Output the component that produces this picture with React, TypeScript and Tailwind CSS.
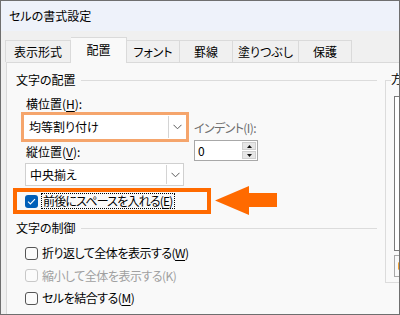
import React from "react";

const FONT = "[font-family:'Noto_Sans_CJK_JP','Noto_Sans',sans-serif] [font-feature-settings:'palt']";

function Chevron() {
  return (
    <svg width="9" height="6" viewBox="0 0 9 6" className="block">
      <path d="M0.5 0.8 L4.5 4.8 L8.5 0.8" fill="none" stroke="#5a5a5a" strokeWidth="1" />
    </svg>
  );
}

function Combo({ text, className }: { text: string; className?: string }) {
  return (
    <div className={"flex items-center bg-white " + (className ?? "")}>
      <div className="flex-1 pl-[4px] text-[12px] leading-none text-black">{text}</div>
      <div className="w-px self-stretch my-[1px] bg-[#d4d4d4]" />
      <div className="w-[16px] flex items-center justify-center">
        <Chevron />
      </div>
    </div>
  );
}

function Box({ state }: { state: "on" | "off" | "disabled" }) {
  if (state === "on") {
    return (
      <div className="w-[13px] h-[13px] rounded-[3px] bg-[#005fb8] flex items-center justify-center shrink-0">
        <svg width="9" height="7" viewBox="0 0 9 7">
          <path d="M1 3.6 L3.4 6 L8 1.2" fill="none" stroke="white" strokeWidth="1.1" />
        </svg>
      </div>
    );
  }
  return (
    <div
      className={
        "w-[13px] h-[13px] rounded-[3px] border bg-[#fbfbfb] shrink-0 " +
        (state === "disabled" ? "border-[#c8c8c8]" : "border-[#555555]")
      }
    />
  );
}

function Check({
  state,
  children,
  className,
}: {
  state: "off" | "disabled";
  children: React.ReactNode;
  className?: string;
}) {
  return (
    <div className={"flex items-center pl-[9px] " + (className ?? "")}>
      <Box state={state} />
      <span
        className={
          "ml-[4px] text-[12px] leading-none tracking-[-0.5px] " +
          (state === "disabled" ? "text-[#a0a0a0]" : "text-black")
        }
      >
        {children}
      </span>
    </div>
  );
}

function GroupHeader({ text, className }: { text: string; className?: string }) {
  return (
    <div className={"flex items-center h-[20px] " + (className ?? "")}>
      <span className="text-[12px] leading-none text-black">{text}</span>
      <div className="flex-1 h-px bg-[#dcdcdc] ml-[5px]" />
    </div>
  );
}

const tabs = [
  { label: "表示形式", w: "w-[66px]", active: false },
  { label: "配置", w: "w-[56px]", active: true },
  { label: "フォント", w: "w-[53px]", active: false },
  { label: "罫線", w: "w-[53px]", active: false },
  { label: "塗りつぶし", w: "w-[66px]", active: false },
  { label: "保護", w: "w-[53px]", active: false },
];

export default function App() {
  return (
    <div className={"w-[400px] h-[315px] overflow-hidden border border-[#6f6f6f] bg-[#f0f0f0] flex flex-col " + FONT}>
      {/* title bar */}
      <div className="h-[30px] bg-[#eef2fa] flex items-center pl-[8px] text-[12px] text-black leading-none shrink-0">
        セルの書式設定
      </div>
      {/* tabs */}
      <div className="h-[31px] flex items-end pl-[4px] shrink-0">
        {tabs.map((t, i) => (
          <div
            key={t.label}
            className={
              t.w +
              " flex items-center justify-center text-[12px] leading-none text-black border-t border-r border-[#dadada] " +
              (i === 0 ? "border-l " : "") +
              (t.active
                ? "h-[26px] bg-[#f9f9f9] relative z-10 -mb-px pb-[2px]"
                : "h-[22px] bg-[#f0f0f0]")
            }
          >
            {t.label}
          </div>
        ))}
      </div>
      {/* panel */}
      <div className="flex-1 ml-[5px] border-t border-l border-[#dadada] bg-[#f9f9f9] flex overflow-hidden">
        {/* left column */}
        <div className="w-[370px] pl-[9px] pt-[7px] flex flex-col shrink-0">
          <GroupHeader text="文字の配置" />
          <div className="flex mt-[5px]">
            <div className="ml-[5px] w-[168px] flex flex-col">
              <div className="h-[18px] pl-[5px] flex items-center text-[12px] leading-none text-black">
                横位置(<span className="underline underline-offset-2">H</span>):
              </div>
              <div className="h-[30px] border-[3px] border-[#f5a56c] -mt-px">
                <Combo text="均等割り付け" className="h-full pl-[1px] pr-[1px]" />
              </div>
              <div className="h-[18px] mt-[1px] pl-[5px] flex items-center text-[12px] leading-none text-black">
                縦位置(<span className="underline underline-offset-2">V</span>):
              </div>
              <Combo text="中央揃え" className="h-[23px] w-[159px] ml-[4px] mt-[2px] border border-[#d0d0d0]" />
            </div>
            <div className="ml-[5px] flex flex-col">
              <div className="h-[18px] mt-[24px] flex items-center text-[12px] leading-none tracking-[-0.6px] text-[#6d6d6d]">
                インデント(I):
              </div>
              <div className="h-[21px] w-[64px] mt-[3px] border border-[#a8a8a8] bg-white flex items-center">
                <span className="flex-1 pl-[3px] text-[12px] leading-none text-black">0</span>
                <div className="w-[15px] h-full flex flex-col gap-px py-[1px] pr-[1px]">
                  <div className="flex-1 bg-[#e6e6e6] border border-[#cfcfcf] flex items-center justify-center">
                    <svg width="5" height="3" viewBox="0 0 5 3"><path d="M0 3 L2.5 0 L5 3Z" fill="#111" /></svg>
                  </div>
                  <div className="flex-1 bg-[#e6e6e6] border border-[#cfcfcf] flex items-center justify-center">
                    <svg width="5" height="3" viewBox="0 0 5 3"><path d="M0 0 L2.5 3 L5 0Z" fill="#111" /></svg>
                  </div>
                </div>
              </div>
            </div>
          </div>
          {/* highlighted checkbox row */}
          <div className="relative -ml-[3px] mt-[2px] h-[26px]">
            <div className="w-[198px] h-[26px] border-4 border-[#ff6a00] flex items-center pl-[8px]">
              <Box state="on" />
              <span className="ml-[3px] px-px py-[1px] border border-dotted border-black text-[12px] leading-none tracking-[-0.8px] text-black">
                前後にスペースを入れる(<span className="underline underline-offset-2">E</span>)
              </span>
            </div>
            <svg
              width="64"
              height="30"
              viewBox="0 0 64 30"
              className="absolute left-[202px] top-[-2px]"
            >
              <path d="M0 14.5 L34 0 L34 7 L62 7 L62 21 L34 21 L34 29 Z" fill="#ff6a00" />
            </svg>
          </div>
          <GroupHeader text="文字の制御" className="mt-[4px]" />
          <Check state="off" className="h-[22px] mt-[4px]">
            折り返して全体を表示する(<span className="underline underline-offset-2">W</span>)
          </Check>
          <Check state="disabled" className="h-[23px]">
            縮小して全体を表示する(K)
          </Check>
          <Check state="off" className="h-[22px]">
            セルを結合する(<span className="underline underline-offset-2">M</span>)
          </Check>
        </div>
        {/* right column (clipped) */}
        <div className="ml-[8px] mt-[17px] flex-1">
          <div className="relative h-[203px] border border-r-0 border-[#dcdcdc] pl-[8px] pt-[15px]">
            <span className="absolute left-[5px] top-[-8px] bg-[#f9f9f9] text-[12px] leading-none text-black">方</span>
            <div className="h-[155px] border border-r-0 border-[#7a7a7a] bg-white" />
            <div className="h-[22px] mt-[4px] border border-r-0 border-[#a8a8a8] bg-[#f9f9f9] flex items-center pl-[3px]">
              <div className="w-[3px] h-[8px] bg-[#f0a030] rounded-full" />
            </div>
          </div>
        </div>
      </div>
    </div>
  );
}
